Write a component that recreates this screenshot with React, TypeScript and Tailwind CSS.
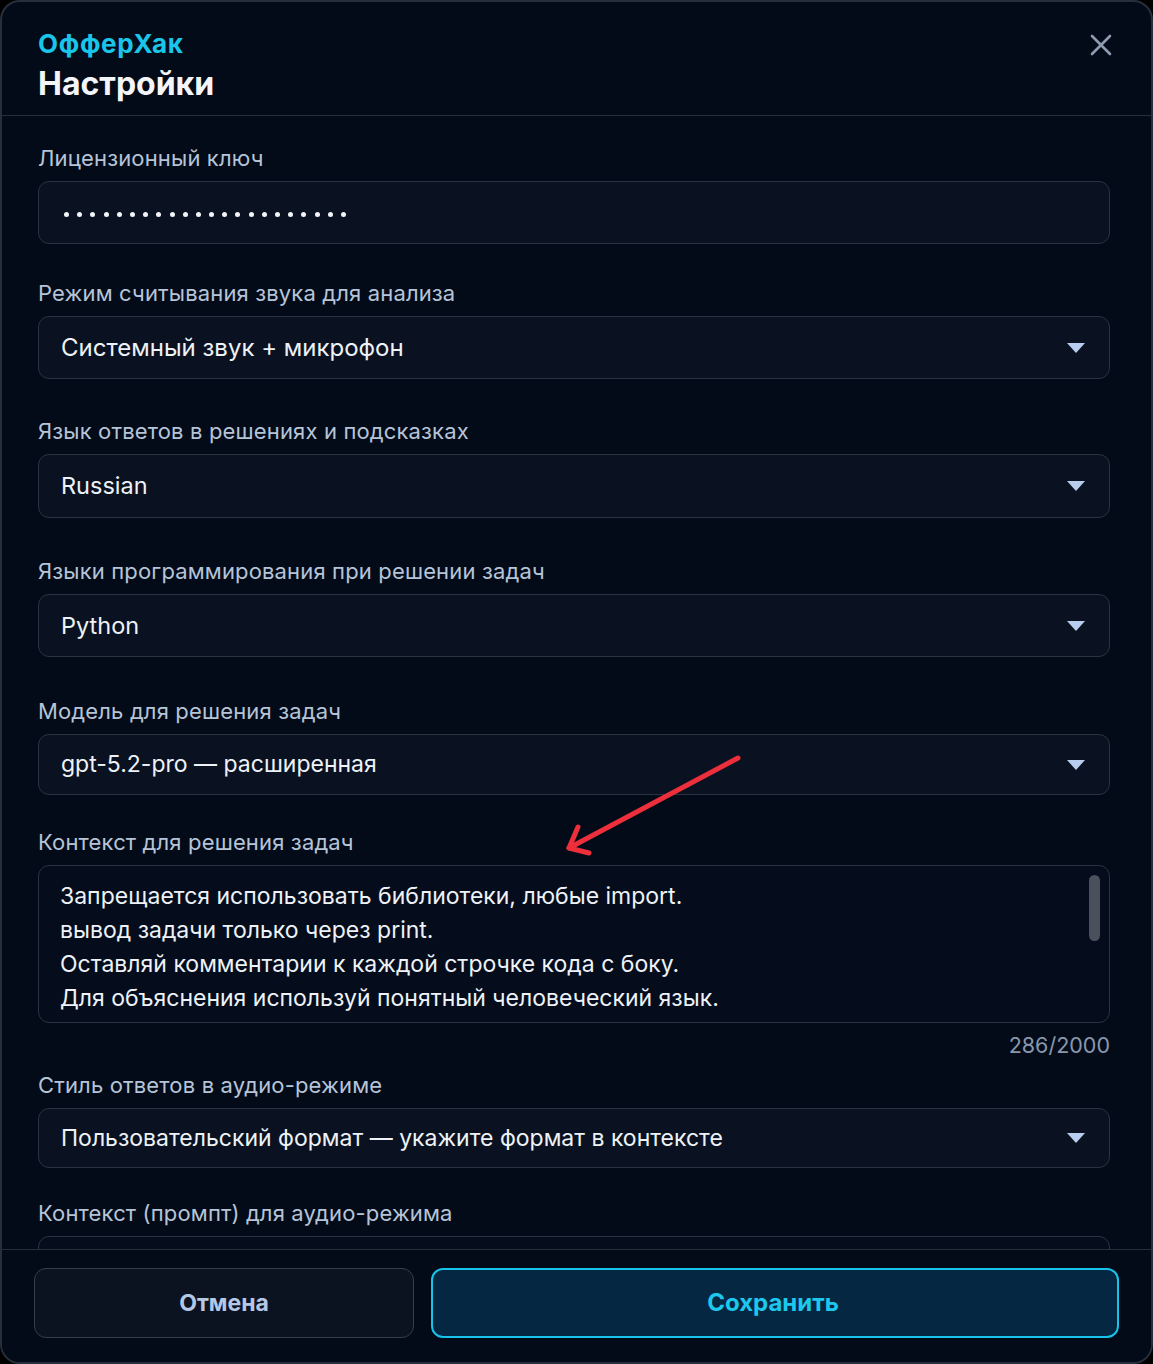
const font = { fontFamily: "Inter, 'Noto Sans', 'Liberation Sans', sans-serif" };

function Label({ children, className = "" }: { children: React.ReactNode; className?: string }) {
  return <div className={`text-[22px] leading-[28px] tracking-[0.15px] text-[#b6c4d8] ${className}`}>{children}</div>;
}

function Select({ value, h, size = "text-[24px]" }: { value: string; h: string; size?: string }) {
  return (
    <div className={`mt-[9px] ${h} flex items-center justify-between rounded-[11px] border border-[#2b3342] bg-[#0a1221] pl-[22px] pr-[24px]`}>
      <span className={`${size} text-[#eef2f7]`}>{value}</span>
      <svg width="18" height="10" viewBox="0 0 18 10">
        <path d="M0 0 H18 L9 10 Z" fill="#b9cdee" />
      </svg>
    </div>
  );
}

export default function App() {
  const dots = Array.from({ length: 22 });

  return (
    <div className="w-[1153px] h-[1364px] bg-black" style={font}>
      <div className="relative w-full h-full flex flex-col rounded-[20px] border-2 border-[#272f3c] bg-[#030b19] overflow-hidden">
        {/* header */}
        <div className="h-[114px] shrink-0 border-b border-[#262e3b] pl-[36px] pr-[35px] pt-[26px] flex justify-between">
          <div>
            <div className="text-[26px] leading-[32px] font-bold text-[#19c6ea] tracking-[0.7px]">ОфферХак</div>
            <div className="mt-[3px] text-[32px] leading-[42px] font-bold text-[#f3f5f8]">Настройки</div>
          </div>
          <button className="mt-[2px] h-[30px] w-[30px] flex items-center justify-center">
            <svg width="22" height="22" viewBox="0 0 22 22">
              <path d="M2 2 L20 20 M20 2 L2 20" stroke="#8e9bb0" strokeWidth="2.6" strokeLinecap="round" />
            </svg>
          </button>
        </div>

        {/* body */}
        <div className="flex-1 overflow-hidden pl-[36px] pr-[41px] pt-[28px]">
          <Label>Лицензионный ключ</Label>
          <div className="mt-[9px] h-[63px] flex items-center gap-[8.2px] rounded-[11px] border border-[#2b3342] bg-[#0a1221] pl-[25px] pt-[3px]">
            {dots.map((_, i) => (
              <span key={i} className="h-[5px] w-[5px] rounded-full bg-[#f2f4f7]" />
            ))}
          </div>

          <Label className="mt-[35px]">Режим считывания звука для анализа</Label>
          <Select value="Системный звук + микрофон" h="h-[63px]" />

          <Label className="mt-[38px]">Язык ответов в решениях и подсказках</Label>
          <Select value="Russian" h="h-[64px]" size="text-[23.5px]" />

          <Label className="mt-[39px]">Языки программирования при решении задач</Label>
          <Select value="Python" h="h-[63px]" size="text-[23.5px]" />

          <Label className="mt-[40px]">Модель для решения задач</Label>
          <Select value="gpt-5.2-pro — расширенная" h="h-[61px]" size="text-[23px]" />

          <Label className="mt-[33px]">Контекст для решения задач</Label>
          <div className="relative mt-[9px] h-[158px] rounded-[11px] border border-[#2b3342] bg-[#050d1c] pl-[21px] pt-[13px] overflow-hidden">
            <div className="text-[23px] leading-[34px] text-[#eef2f7]">
              <div>Запрещается использовать библиотеки, любые import.</div>
              <div>вывод задачи только через print.</div>
              <div>Оставляй комментарии к каждой строчке кода с боку.</div>
              <div>Для объяснения используй понятный человеческий язык.</div>
            </div>
            <div className="absolute right-[9px] top-[9px] h-[66px] w-[11px] rounded-full bg-[#4a505c]" />
          </div>
          <div className="mt-[8px] text-right text-[21.5px] leading-[28px] text-[#8897ad]">286/2000</div>

          <Label className="mt-[12px]">Стиль ответов в аудио-режиме</Label>
          <Select value="Пользовательский формат — укажите формат в контексте" h="h-[60px]" size="text-[23px]" />

          <Label className="mt-[31px]">Контекст (промпт) для аудио-режима</Label>
          <div className="mt-[9px] h-[80px] rounded-[11px] border border-[#2b3342] bg-[#050d1c]" />
        </div>

        {/* footer */}
        <div className="shrink-0 border-t border-[#262e3b] bg-[#030b19] px-[32px] pt-[18px] pb-[24px] flex gap-[17px]">
          <button className="h-[70px] w-[380px] rounded-[12px] border border-[#363e4c] bg-[#0b1321] text-[23px] font-bold text-[#b4c8e6]">
            Отмена
          </button>
          <button className="h-[70px] flex-1 rounded-[12px] border-2 border-[#17c3e8] bg-[#062741] text-[24px] font-bold text-[#1cc8ee] pr-[4px]">
            Сохранить
          </button>
        </div>

        {/* red arrow annotation */}
        <svg className="absolute left-0 top-0 pointer-events-none" width="1153" height="1364">
          <g stroke="#ec2f3b" strokeWidth="5" strokeLinecap="round" strokeLinejoin="round" fill="none">
            <path d="M736 756 L567 846" />
            <path d="M576 825 L567 846 L587 851" />
          </g>
        </svg>
      </div>
    </div>
  );
}
